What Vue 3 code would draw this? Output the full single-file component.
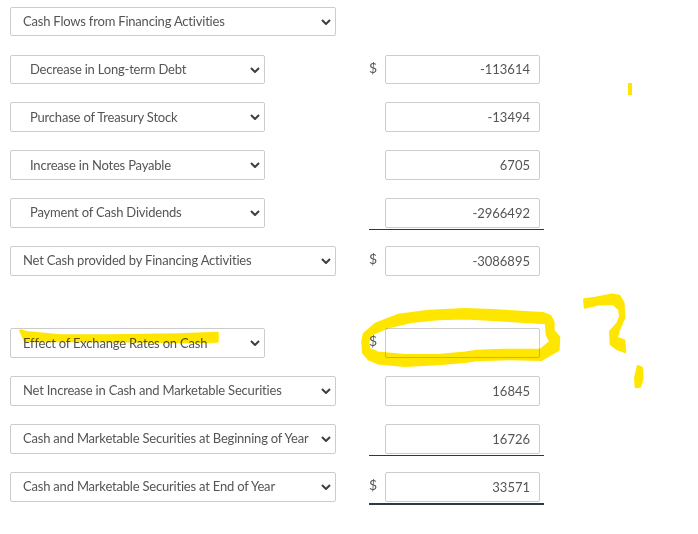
<script setup>
const rows = [
  { label: 'Cash Flows from Financing Activities', wide: true },
  { label: 'Decrease in Long-term Debt', indent: true, cur: true, value: '-113614' },
  { label: 'Purchase of Treasury Stock', indent: true, value: '-13494' },
  { label: 'Increase in Notes Payable', indent: true, value: '6705' },
  { label: 'Payment of Cash Dividends', indent: true, value: '-2966492', line: 'single' },
  { label: 'Net Cash provided by Financing Activities', wide: true, cur: true, value: '-3086895', after: true },
  { label: 'Effect of Exchange Rates on Cash', cur: true, value: '' },
  { label: 'Net Increase in Cash and Marketable Securities', wide: true, value: '16845' },
  { label: 'Cash and Marketable Securities at Beginning of Year', wide: true, value: '16726', line: 'single' },
  { label: 'Cash and Marketable Securities at End of Year', wide: true, cur: true, value: '33571', line: 'double' },
]
</script>

<template>
  <div class="page">
    <div v-for="r in rows" :key="r.label" class="row" :class="{ after: r.after }">
      <div class="label-col">
        <div class="pick-wrap" :class="{ wide: r.wide }">
          <select class="pick" :class="{ indent: r.indent }">
            <option>{{ r.label }}</option>
          </select>
          <svg class="chev" width="10" height="6" viewBox="0 0 10 6">
            <path d="M1 1L5 5L9 1" />
          </svg>
        </div>
      </div>
      <div v-if="r.value !== undefined" class="amount" :class="r.line">
        <span class="cur">{{ r.cur ? '$' : '' }}</span>
        <input class="num" type="text" :value="r.value" readonly />
      </div>
    </div>

    <svg class="ink" width="698" height="534" viewBox="0 0 698 534">
      <path class="bare" d="M628 83h4v12h-4z" />
      <path d="M20.5 330.6L26.7 332.3L60 335.5L110 335.5L176.7 334.5L217.5 333L217.5 341.5L186.7 342L100 341L25 341Z" />
      <path fill-rule="evenodd" d="M362.5 341.7L364 334L375.5 324L398.5 315L428.5 311L465 309.3L493 310.3L543 313.3L550 316L553.3 322L553.3 330.5L559 337L558.3 349.8L541.5 359.7L510 359L476.7 360L465 361.7L438 364L405 365.7L378.5 363.3L369 359.3L363.3 353ZM368 341.7L369 349L377.7 352.7L405 355.3L438 355.3L465 352.7L476.7 351L503 350L540.4 350L550.5 341.7L547 335L546 323L493 319.7L465 318.3L438 319L411.5 321.7L387.7 327.3L370.7 334.5Z" />
      <path d="M584.3 299.5L595.2 298L612 294.7L619.3 296L623.3 303.2L624 317.8L619 329.4L616.5 338L624 340.5L625 351.7L617 348.8L611 344.3L610.3 331.7L617.6 323.4L620.4 316.3L619.3 309.3L613.6 303.7L598.1 304.3L585 307.5Z" />
      <path d="M638 366.3L641.7 367.9L642.3 378L640.2 386.3L636 387L635.3 378Z" />
    </svg>
  </div>
</template>

<style scoped>
.page {
  position: relative;
  width: 698px;
  height: 534px;
  box-sizing: border-box;
  padding: 6.7px 0 0 10px;
  background: #fff;
  font-family: Lato, "Liberation Sans", sans-serif;
  color: #555;
  overflow: hidden;
}
.row {
  display: flex;
  height: 29.8px;
  margin-bottom: 18.05px;
}
.row.after {
  margin-bottom: 52.55px;
}
.label-col {
  width: 359px;
  flex: none;
}
.pick-wrap {
  position: relative;
  width: 255px;
  height: 100%;
}
.pick-wrap.wide {
  width: 326px;
}
.pick {
  display: block;
  appearance: none;
  width: 100%;
  height: 100%;
  box-sizing: border-box;
  padding: 0 0 1px 12px;
  border: 1px solid #ccc;
  border-radius: 2px;
  background-color: #fff;
  font: 13px Lato, "Liberation Sans", sans-serif;
  letter-spacing: -0.2px;
  color: #555;
  outline: none;
}
.pick.indent {
  padding-left: 19px;
}
.chev {
  position: absolute;
  right: 5px;
  top: 12px;
  fill: none;
  stroke: #3d3d3d;
  stroke-width: 2;
  pointer-events: none;
}
.amount {
  position: relative;
  display: flex;
  width: 175px;
  height: 100%;
}
.amount.single::after,
.amount.double::after {
  content: "";
  position: absolute;
  left: 0;
  right: 0;
  height: 1px;
  top: calc(100% + 1px);
  background: #2d3a44;
}
.amount.double::after {
  height: 2px;
}
.cur {
  width: 16px;
  flex: none;
  font-size: 14px;
  line-height: 25px;
  color: #555;
}
.num {
  width: 155px;
  height: 100%;
  box-sizing: border-box;
  padding: 0 9px 0 0;
  border: 1px solid #ccc;
  border-radius: 2px;
  background: #fff;
  text-align: right;
  font: 13px Lato, "Liberation Sans", sans-serif;
  color: #555;
  outline: none;
}
.ink {
  position: absolute;
  left: 0;
  top: 0;
  fill: #ffe600;
  stroke: #ffe600;
  stroke-width: 2.6;
  stroke-linejoin: round;
  mix-blend-mode: multiply;
  pointer-events: none;
}
.ink .bare {
  stroke: none;
}
</style>
